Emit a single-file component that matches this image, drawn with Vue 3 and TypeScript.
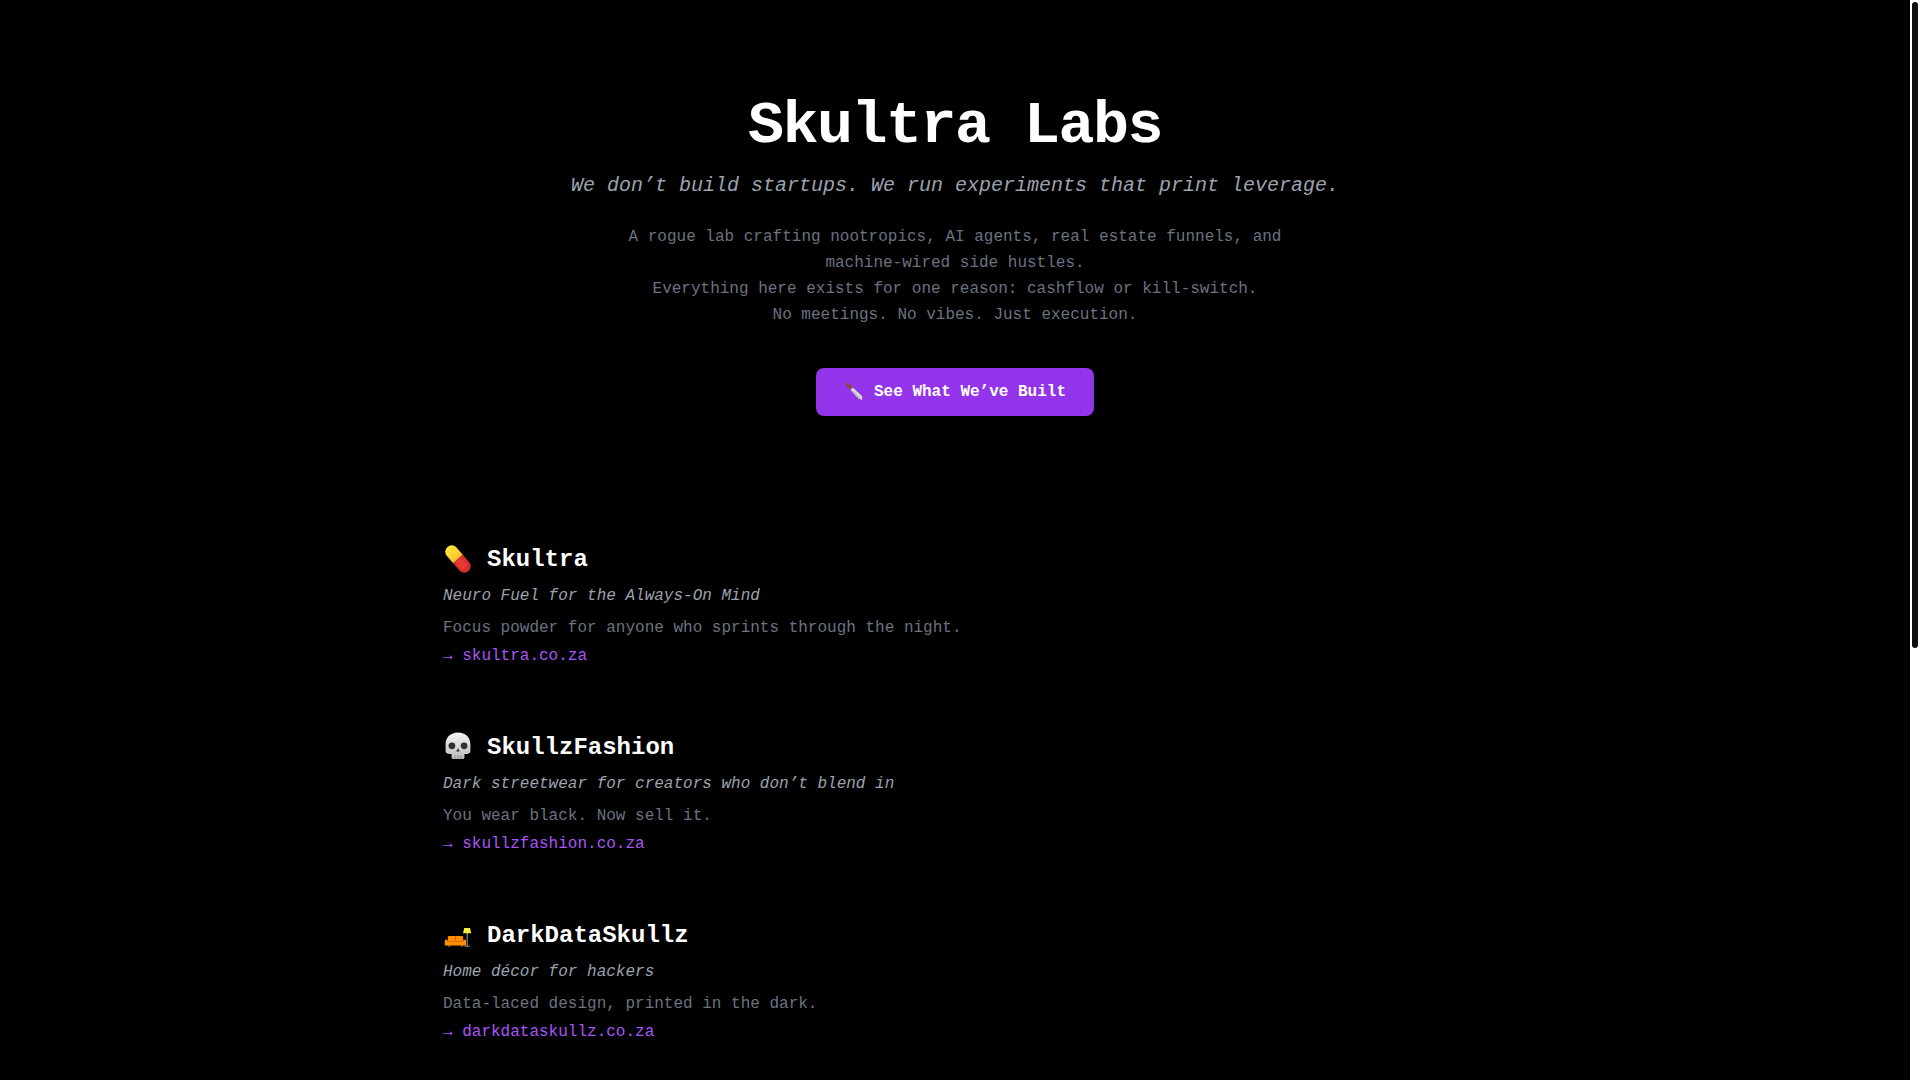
<script setup lang="ts">
interface Project {
  icon: 'pill' | 'skull' | 'sofa'
  name: string
  tagline: string
  description: string
  domain: string
}

const projects: Project[] = [
  { icon: 'pill', name: 'Skultra', tagline: 'Neuro Fuel for the Always-On Mind', description: 'Focus powder for anyone who sprints through the night.', domain: 'skultra.co.za' },
  { icon: 'skull', name: 'SkullzFashion', tagline: 'Dark streetwear for creators who don’t blend in', description: 'You wear black. Now sell it.', domain: 'skullzfashion.co.za' },
  { icon: 'sofa', name: 'DarkDataSkullz', tagline: 'Home décor for hackers', description: 'Data-laced design, printed in the dark.', domain: 'darkdataskullz.co.za' },
]
</script>

<template>
  <div class="shell">
    <main class="page">
      <section class="hero">
        <h1>Skultra Labs</h1>
        <p class="lead">We don’t build startups. We run experiments that print leverage.</p>
        <p class="intro">
          A rogue lab crafting nootropics, AI agents, real estate funnels, and machine-wired side hustles.<br />
          Everything here exists for one reason: cashflow or kill-switch.<br />
          No meetings. No vibes. Just execution.
        </p>
        <button type="button" class="cta">
          <svg width="20" height="20" viewBox="0 1 20 20" aria-hidden="true">
            <path d="M2 2.6Q2.6 1.4 4 2L9 6.8L6.8 8.8L2.2 4Z" fill="#8d4b20" />
            <path d="M8.6 6.4L17.4 14.6Q18.6 16 18.2 18.8Q15.8 18.6 14 17L6.6 9Z" fill="#e0e0e0" />
            <path d="M6.6 9L14 17Q15.8 18.6 18.2 18.8L7.6 8Z" fill="#bdbdbd" />
          </svg>
          See What We’ve Built
        </button>
      </section>
      <section class="projects">
        <article v-for="project in projects" :key="project.domain">
          <h2>
            <svg v-if="project.icon === 'pill'" width="30" height="30" viewBox="0 1 30 30" aria-hidden="true">
              <defs>
                <linearGradient id="pill-top" x1="0" y1="0" x2="0" y2="1">
                  <stop offset="0" stop-color="#ffeb3b" />
                  <stop offset="1" stop-color="#fbc02d" />
                </linearGradient>
              </defs>
              <g transform="rotate(-41 15 15)">
                <path d="M8.6 15V5.4A6.4 6.4 0 0 1 21.4 5.4V15Z" fill="url(#pill-top)" />
                <path d="M8.6 15V24.6A6.4 6.4 0 0 0 21.4 24.6V15Z" fill="#d32f2f" />
                <path d="M10.6 15V23A4 4 0 0 0 18.6 23V15Z" fill="#e53935" />
              </g>
            </svg>
            <svg v-else-if="project.icon === 'skull'" width="30" height="30" viewBox="0 2 30 30" aria-hidden="true">
              <defs>
                <linearGradient id="bone" x1="0" y1="0" x2="0" y2="1">
                  <stop offset="0" stop-color="#f5f5f5" />
                  <stop offset="1" stop-color="#bdbdbd" />
                </linearGradient>
              </defs>
              <path d="M15 1.6C7.4 1.6 2.6 6.6 2.6 13.4V19.6Q2.6 22.8 5.6 23H8.6V26.4Q8.6 28 10.4 28H19.6Q21.4 28 21.4 26.4V23H24.4Q27.4 22.8 27.4 19.6V13.4C27.4 6.6 22.6 1.6 15 1.6Z" fill="url(#bone)" />
              <circle cx="8.9" cy="14.8" r="3.4" fill="#303336" />
              <circle cx="21.1" cy="14.8" r="3.4" fill="#303336" />
              <path d="M15 17L13.2 20.6H16.8Z" fill="#303336" />
              <path d="M12 24.4V28M15 24.4V28M18 24.4V28" stroke="#8a8a8a" />
            </svg>
            <svg v-else width="30" height="30" viewBox="0 2 30 30" aria-hidden="true">
              <path d="M24.2 13V27M21.6 27.2H26.6" stroke="#9e9e9e" fill="none" />
              <path d="M21.2 9H27L28.2 14.2H20Z" fill="#ffeb3b" />
              <path d="M5.2 26H7.4V28H5.2ZM18 26H20.2V28H18Z" fill="#6d3b1e" />
              <path d="M4.8 18Q4.8 17 6 17H19Q20.2 17 20.2 18V22H4.8Z" fill="#fb8c00" />
              <path d="M12.5 17V22" stroke="#d66a00" />
              <path d="M1.8 22Q1.8 20.6 3.2 20.6Q4.6 20.6 4.8 22.2H20.2Q20.4 20.6 21.6 20.6Q23 20.6 23 22V26.6H1.8Z" fill="#ff8f00" />
              <path d="M4.8 22.4H20.2" stroke="#e07000" />
            </svg>
            {{ project.name }}
          </h2>
          <p class="tagline">{{ project.tagline }}</p>
          <p class="description">{{ project.description }}</p>
          <a :href="`https://${project.domain}`">→ {{ project.domain }}</a>
        </article>
      </section>
    </main>
    <div class="track" aria-hidden="true">
      <div class="thumb"></div>
    </div>
  </div>
</template>

<style>
body {
  margin: 0;
  background: #000;
}
</style>

<style scoped>
.shell {
  display: flex;
  height: 100vh;
  background: #000;
}
.page {
  flex: 1;
  overflow-y: auto;
  scrollbar-width: none;
  color: #fff;
  font-family: "Liberation Mono", monospace;
  font-size: 16px;
  line-height: 24px;
}
.track {
  box-sizing: border-box;
  width: 10px;
  padding: 2px;
  background: #fff;
}
.thumb {
  height: 60%;
  border-radius: 4px;
  background: #111;
}
h1, h2, p {
  margin: 0;
}
svg {
  overflow: visible;
}
.hero {
  display: flex;
  flex-direction: column;
  align-items: center;
  padding: 96px 24px;
  text-align: center;
}
h1 {
  margin-bottom: 16px;
  font-size: 60px;
  line-height: 60px;
  letter-spacing: -0.025em;
}
.lead {
  margin-bottom: 24px;
  color: #9ca3af;
  font-size: 20px;
  font-style: italic;
  line-height: 28px;
}
.intro {
  max-width: 720px;
  margin-bottom: 40px;
  color: #6b7280;
  line-height: 26px;
}
.cta {
  display: flex;
  align-items: center;
  gap: 10px;
  padding: 12px 28px;
  border: 0;
  border-radius: 8px;
  background: #9333ea;
  color: #fff;
  font: bold 16px/24px "Liberation Mono", monospace;
}
.projects {
  display: grid;
  gap: 64px;
  max-width: 1024px;
  margin: 0 auto;
  padding: 32px 24px;
}
h2 {
  display: flex;
  align-items: center;
  gap: 14px;
  margin-bottom: 8px;
  font-size: 24px;
  line-height: 32px;
}
.tagline {
  margin-bottom: 8px;
  color: #9ca3af;
  font-style: italic;
}
.description {
  margin-bottom: 4px;
  color: #6b7280;
}
a {
  color: #a855f7;
  text-decoration: none;
}
</style>
